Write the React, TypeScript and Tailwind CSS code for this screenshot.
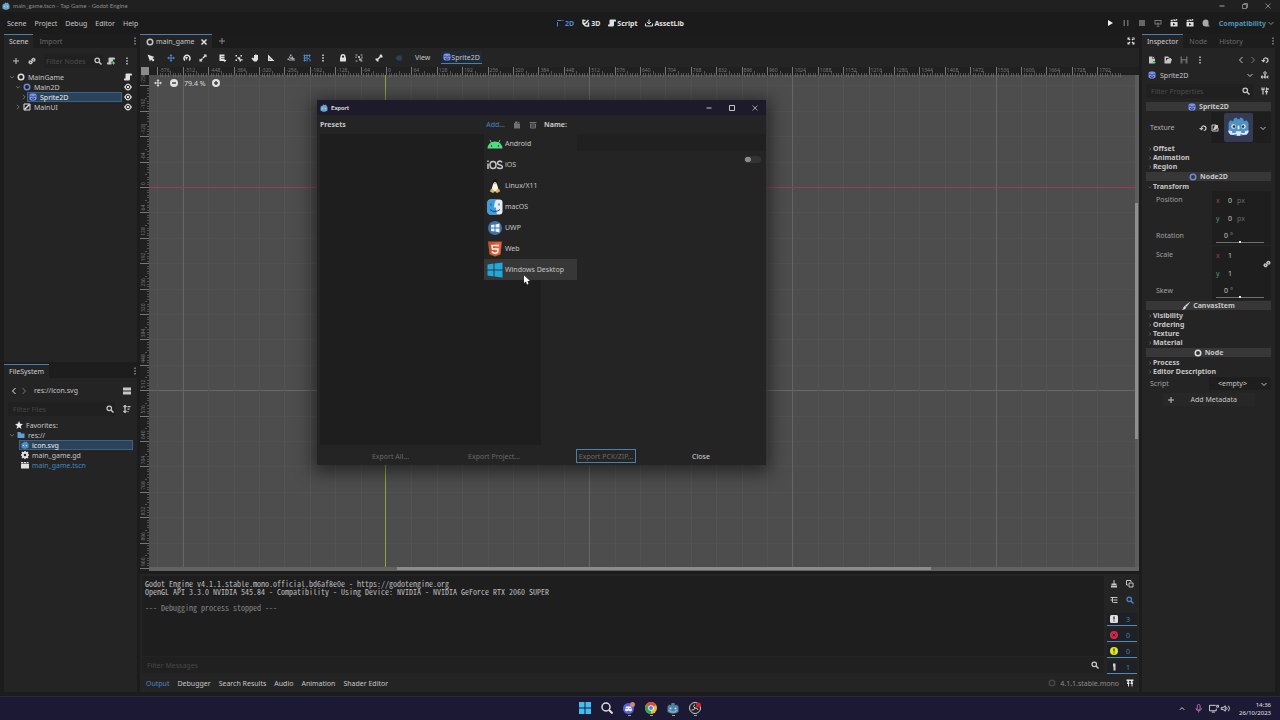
import type { ReactNode } from 'react'

const stroke = { fill: 'none', stroke: 'currentColor', strokeWidth: 2 }

// editor icons, all drawn on a 16x16 grid
const icons: Record<string, ReactNode> = {
  plus: <path d="M8 2v12M2 8h12" {...stroke} />,
  close: <path d="M3 3l10 10M13 3L3 13" {...stroke} strokeWidth={3} />,
  thinClose: <path d="M3 3l10 10M13 3L3 13" {...stroke} strokeWidth={1.5} />,
  minimize: <path d="M3 8h10" {...stroke} />,
  maximize: <path d="M3 3h10v10H3z" {...stroke} />,
  restore: <path d="M3 5h8v8H3zM6 5V3h7v8h-2" {...stroke} strokeWidth={1.5} />,
  link: (
    <path d="M7 6l2-2a2.500 2.500 0 0 1 4 3l-2 2M9 10l-2 2a2.500 2.500 0 0 1-4-3l2-2M6 10l4-4" {...stroke} strokeWidth={3} />
  ),
  search: (
    <>
      <circle cx="6.500" cy="6.500" r="4.500" {...stroke} strokeWidth={2.5} />
      <path d="M10 10l5 5" {...stroke} strokeWidth={3} />
    </>
  ),
  more: <path d="M6.500 1h3v3h-3zM6.500 6.500h3v3h-3zM6.500 12h3v3h-3z" />,
  node: <circle cx="8" cy="8" r="5.500" {...stroke} strokeWidth={3} />,
  sprite: (
    <>
      <rect x="1" y="1" width="14" height="14" rx="4" />
      <path d="M4 5v3M12 5v3M8 6v3M4 11q4 3 8 0" fill="none" stroke="#2c3663" strokeWidth={2} />
    </>
  ),
  control: (
    <>
      <path d="M2 2h12v12H2z" {...stroke} />
      <path d="M3 13L13 3" {...stroke} strokeWidth={3} />
    </>
  ),
  script: <path d="M5 1h9a2 2 0 0 1 2 2v2h-4v7a3 3 0 0 1-3 3H2a2 2 0 0 1-2-2v-2h3V3a2 2 0 0 1 2-2z" />,
  addScript: (
    <>
      <path d="M5 1h9a2 2 0 0 1 2 2v2h-4v4H9v6H2a2 2 0 0 1-2-2v-2h3V3a2 2 0 0 1 2-2z" />
      <path d="M13 9v6M10 12h6" fill="none" stroke="#5fe07a" strokeWidth={2} />
    </>
  ),
  eye: (
    <>
      <path d="M0 8q8-14 16 0q-8 14-16 0z" />
      <circle cx="8" cy="8" r="3.500" fill="none" stroke="#242424" strokeWidth={2} />
    </>
  ),
  right: <path d="M5 2l6 6-6 6" {...stroke} />,
  left: <path d="M11 2L5 8l6 6" {...stroke} />,
  down: <path d="M3 6l5 5 5-5" {...stroke} />,
  select: <path d="M1 1l5 14 2-4 4 4 3-3-4-4 4-2z" />,
  move: <path d="M8 0l3 4H9v3h3V5l4 3-4 3V9H9v3h2l-3 4-3-4h2V9H4v2L0 8l4-3v2h3V4H5z" />,
  rotate: (
    <>
      <path d="M4 13A6 6 0 1 1 12 13" {...stroke} strokeWidth={3} />
      <path d="M4 6h6l-3 6z" />
    </>
  ),
  reload: (
    <>
      <path d="M5 9V8a4.500 4.500 0 1 1 4.500 5" {...stroke} strokeWidth={2.5} />
      <path d="M0 8h9l-4 5z" />
    </>
  ),
  scale: <path d="M9 1h6v6l-2-2-4 4-2-2 4-4zM1 9l2 2 3-3 2 2-3 3 2 2H1z" />,
  listSelect: <path d="M1 1h10v3H4v1h7v3H4v1h7v2l4 2-4 3-2-2H1z" />,
  pivot: <path d="M1 2h3v3H1zM11 2h3v3h-3zM5 6l4 1 1-2 1 6 4-1v3h-3v2h-3v-3L5 9zM1 11h3v3H1z" />,
  hand: <path d="M6 2h2V1h3v1h3v9l-3 4H6L1 9l2-2 3 2z" />,
  ruler: <path d="M2 1l13 13H2zM5 8v3h3z" fillRule="evenodd" />,
  smartSnap: <path d="M6 1h3v3H6zM1 9h3v3H1zM4 5h3v3H4zM9 8V5h3v3h3v6h-2v-3h-2v3H9v-4H7v4H5V9z" />,
  gridSnap: <path d="M1 3h14M1 8h8M1 13h5M3 1v14M8 1v8M13 1v6M8 15v-3a3 3 0 0 1 6 0v3" {...stroke} />,
  lock: <path d="M3 7V5a5 5 0 0 1 10 0v2h1v8H2V7zm3 0h4V5a2 2 0 0 0-4 0z" fillRule="evenodd" />,
  group: (
    <path d="M1 1h4v2H1zM11 1h4v2h-4zM1 5h2v3H1zM6 4h4v4H6zM13 5h2v4h-2zM8 9h5v4H8zM1 13h4v2H1zM11 13h4v2h-4z" />
  ),
  bone: <path d="M10 1l3 0 2 3v3h-4L7 11v4H4l-1-2-2-1V9h4l4-4z" />,
  key: <path d="M1 8l4-5h7l3 5-3 5H5z" />,
  expand: (
    <path d="M1 1h5L1 6zM10 1h5v5zM1 10v5h5zM15 10v5h-5zM4 2l3 3-2 2-3-3zM12 2L9 5l2 2 3-3zM4 14l3-3-2-2-3 3zM12 14l-3-3 2-2 3 3z" />
  ),
  play: <path d="M4 2l10 6-10 6z" />,
  pause: <path d="M3 2h3v12H3zM10 2h3v12h-3z" />,
  stop: <path d="M2 2h12v12H2z" />,
  remote: <path d="M1 2h14v9H9v3h3l-4 2-4-2h3v-3H1zm2 2v5h3l2-3 2 3h3V4z" fillRule="evenodd" />,
  clapper: (
    <>
      <path d="M1 6h14v9H1zM1 2l13-2 1 3L2 5z" />
      <path d="M6 8l5 2.500L6 13z" fill="#1b1b1b" />
      <path d="M5 1l2 3M10 0l2 3" stroke="#1b1b1b" strokeWidth={1.5} />
    </>
  ),
  scene: (
    <>
      <path d="M0 6h16v9H0zM0 2h15v3H0z" />
      <path d="M4 1l2 4M10 1l2 4" stroke="#1b1b1b" strokeWidth={1.5} />
    </>
  ),
  movie: <path d="M8 1a5 5 0 0 1 5 5v7h2v2H8A7 7 0 1 1 8 1z" />,
  two: <path d="M3 15V3h12" {...stroke} strokeDasharray="9 2" />,
  three: <path d="M2 1v8l5 5M2 9h5l6-7M7 14h6V7M3 3h4" {...stroke} strokeWidth={3} />,
  download: <path d="M8 1v9M4 6l4 4 4-4M1 9v5h14V9" {...stroke} />,
  newFile: (
    <>
      <path d="M2 1h7v5h5v4h-4v5H2zM10 1l4 4h-4z" />
      <path d="M12 10v6M9 13h6" stroke="#5fe07a" strokeWidth={2} />
    </>
  ),
  open: <path d="M1 1h7l3 3h3v2h2l-3 9H1zm3 3v7l2-5h5V5H8V4z" fillRule="evenodd" />,
  save: <path d="M1 1h14v14H1zM4 1v5h8V1zM5 9v6h6V9z" fillRule="evenodd" />,
  copy: <path d="M1 1h9v3M1 1v9h3M6 6h8v8H6z" {...stroke} />,
  filledCopy: <path d="M4 1h5v4h5v10H2V4h2zM10 1l4 3h-4z" />,
  trash: <path d="M1 3h14M3 6h10v8H3zM6 7v6M10 7v6" {...stroke} />,
  book: (
    <>
      <circle cx="8" cy="4" r="2.500" {...stroke} />
      <path d="M8 6v4M1 10h3v4H1zM7 10h3v4H7zM15 10h-2v4h2" {...stroke} />
    </>
  ),
  tools: <path d="M4 15V7M2 1v4h4V1M11 1v7M11 8v7M8 9h6M14 2v4" {...stroke} strokeWidth={2.5} />,
  split: <path d="M0 1h16v6H0zM0 9h16v6H0z" />,
  sort: <path d="M4 1v13M1 4l3-3 3 3M1 12l3 3 3-3M9 3h6M9 8h4M9 13h2" {...stroke} strokeWidth={2.5} />,
  star: <path d="M8 0l2.300 5.500L16 6l-4.500 4L13 16l-5-3.500L3 16l1.500-6L0 6l5.700-.5z" />,
  folder: <path d="M1 2h6l1 3h7v9H1z" />,
  gear: (
    <>
      <circle cx="8" cy="8" r="4.500" {...stroke} strokeWidth={4} />
      <path d="M8 0v3M8 13v3M0 8h3M13 8h3M2 2l3 3M11 11l3 3M2 14l3-3M11 5l3-3" {...stroke} strokeWidth={3} />
    </>
  ),
  godot: (
    <>
      <path d="M1 6l3-3 1 1 1-3 3 1h1l2-1 1 3 2 2v7q-7 5-14 0z" />
      <circle cx="5" cy="9" r="1.300" fill="#bcd9ea" />
      <circle cx="11" cy="9" r="1.300" fill="#bcd9ea" />
    </>
  ),
  brush: <path d="M15 1L7 7l2 2zM6 8l2 2q-1 5-7 5 2-1 2-3t3-4z" stroke="currentColor" strokeWidth={1} />,
  image: (
    <>
      <path d="M2 2h8M2 2v12h12V8" {...stroke} />
      <path d="M8 2h6v6L8 12H4z" />
    </>
  ),
  clear: <path d="M7 0h2v7h4v3H3V7h4zM2 11h12v4H2z" />,
  tree: <path d="M1 3h14M1 8h3M7 8h8M5 3v10M7 13h8" {...stroke} />,
  pin: <path d="M1 1h14v3H1zM2 7h5v3H6v5H4v-5H2zM9 7h5v3h-1v5h-2v-5H9zM3 4h3v3H3zM10 4h3v3h-3z" />,
  message: (
    <>
      <rect width="16" height="16" rx="3" />
      <path d="M8 3v6M8 11v2" stroke="#222222" strokeWidth={2.5} />
    </>
  ),
  error: (
    <>
      <circle cx="8" cy="8" r="8" />
      <path d="M5 5l6 6M11 5l-6 6" stroke="#5b0d1d" strokeWidth={2} />
    </>
  ),
  warning: (
    <>
      <circle cx="8" cy="8" r="8" />
      <path d="M8 3v6M8 11v2" stroke="#333300" strokeWidth={2.5} />
    </>
  ),
  edit: <path d="M6 1h5v14H7V7H6z" />,
}

function Icon({ name, size = 'size-2', className = '' }: { name: string; size?: string; className?: string }) {
  return (
    <svg viewBox="0 0 16 16" fill="currentColor" aria-hidden="true" className={`shrink-0 ${size} ${className}`}>
      {icons[name]}
    </svg>
  )
}

function IconButton({ name, label, className = '' }: { name: string; label: string; className?: string }) {
  return (
    <button type="button" aria-label={label} className={`flex size-4 shrink-0 items-center justify-center ${className}`}>
      <Icon name={name} />
    </button>
  )
}

function TitleBar() {
  return (
    <header className="flex h-3 shrink-0 items-center bg-[#202020] pl-[2px] pr-[4px]">
      <Icon name="godot" className="text-[#6ba4cc]" />
      <span className="ml-[3px] flex-1 font-['Lato',sans-serif] text-[6px] leading-[8px] text-[#8c8c8c]">
        main_game.tscn - Tap Game - Godot Engine
      </span>
      <div className="flex gap-[7px] text-[#a0a0a0]">
        <IconButton name="minimize" label="Minimize" />
        <IconButton name="restore" label="Restore" />
        <IconButton name="thinClose" label="Close window" />
      </div>
    </header>
  )
}

const modes = [
  { icon: 'two', label: '2D' },
  { icon: 'three', label: '3D' },
  { icon: 'script', label: 'Script' },
  { icon: 'download', label: 'AssetLib' },
]

function MenuBar() {
  return (
    <nav className="flex h-[22px] shrink-0 items-center justify-between bg-[#1b1b1b] pl-[7px] pr-[5px]">
      <div className="flex gap-2">
        {['Scene', 'Project', 'Debug', 'Editor', 'Help'].map((item) => (
          <button key={item} type="button">
            {item}
          </button>
        ))}
      </div>
      <div className="flex gap-2 font-bold">
        {modes.map((mode, i) => (
          <button
            key={mode.label}
            type="button"
            className={`flex items-center gap-[1px] ${i === 0 ? 'text-[#4c8bd0]' : 'text-[#e0e0e0]'}`}
          >
            <Icon name={mode.icon} />
            {mode.label}
          </button>
        ))}
      </div>
      <div className="flex items-center">
        <IconButton name="play" label="Run project" className="text-[#eeeeee]" />
        <IconButton name="pause" label="Pause" className="text-[#666666]" />
        <IconButton name="stop" label="Stop" className="text-[#666666]" />
        <IconButton name="remote" label="Remote debug" className="text-[#777777]" />
        <IconButton name="clapper" label="Run current scene" className="text-[#e0e0e0]" />
        <IconButton name="clapper" label="Run specific scene" className="text-[#e0e0e0]" />
        <IconButton name="movie" label="Movie maker" className="text-[#aaaaaa]" />
        <button type="button" className="ml-[5px] flex items-center gap-[1px] font-bold text-[#4e94b4]">
          Compatibility
          <Icon name="down" className="text-[#888888]" />
        </button>
      </div>
    </nav>
  )
}

function DockTabs({ tabs }: { tabs: string[] }) {
  return (
    <div className="flex h-[14px] shrink-0 items-center bg-[#1d1d1d]">
      {tabs.map((tab, i) => (
        <button
          key={tab}
          type="button"
          className={
            i === 0
              ? 'h-full border-t border-[#4a7fb0] bg-[#242424] px-[5px] text-[#d0d0d0]'
              : 'h-full border-t border-transparent px-[6px] text-[#6a6a6a]'
          }
        >
          {tab}
        </button>
      ))}
      <button type="button" aria-label="Dock options" className="ml-auto mr-[-2px] text-[#8a8a8a]">
        <Icon name="more" />
      </button>
    </div>
  )
}

type TreeRow = { name: string; icon: string; color: string; pad: string; arrow?: string; end?: string; active?: boolean; text?: string }

const sceneRows: TreeRow[] = [
  { name: 'MainGame', icon: 'node', color: 'text-[#e0e0e0]', pad: 'pl-[5px]', arrow: 'down', end: 'script' },
  { name: 'Main2D', icon: 'node', color: 'text-[#6f89d8]', pad: 'pl-[11px]', arrow: 'down', end: 'eye' },
  { name: 'Sprite2D', icon: 'sprite', color: 'text-[#7b93ee]', pad: 'pl-[17px]', arrow: 'right', end: 'eye', active: true },
  { name: 'MainUI', icon: 'control', color: 'text-[#e0e0e0]', pad: 'pl-[11px]', arrow: 'right', end: 'eye' },
]

const fileRows: TreeRow[] = [
  { name: 'Favorites:', icon: 'star', color: 'text-[#e8e8e8]', pad: 'pl-[9px]' },
  { name: 'res://', icon: 'folder', color: 'text-[#5f9fd6]', pad: 'pl-[5px]', arrow: 'down' },
  { name: 'icon.svg', icon: 'godot', color: 'text-[#4f8fc0]', pad: 'pl-[15px]', active: true },
  { name: 'main_game.gd', icon: 'gear', color: 'text-[#e0e0e0]', pad: 'pl-[15px]' },
  { name: 'main_game.tscn', icon: 'scene', color: 'text-[#e0e0e0]', pad: 'pl-[15px]', text: 'text-[#3f87c0]' },
]

function Tree({ rows }: { rows: TreeRow[] }) {
  return (
    <ul>
      {rows.map((row) => (
        <li key={row.name} className={`flex h-[10px] items-center ${row.pad}`}>
          {row.arrow && <Icon name={row.arrow} size="size-[6px]" className="text-[#888888]" />}
          <div
            className={`flex h-[10px] flex-1 items-center gap-[3px] border pl-[1px] ${
              row.active ? 'border-[#3d6284] bg-[#2b435a] text-[#f0f0f0]' : 'border-transparent'
            } ${row.text ?? ''}`}
          >
            <Icon name={row.icon} className={row.color} />
            {row.name}
          </div>
          {row.end ? <Icon name={row.end} className="ml-[2px] mr-[5px] text-[#e0e0e0]" /> : <span className="w-1" />}
        </li>
      ))}
    </ul>
  )
}

function LeftDock() {
  return (
    <aside className="flex w-[133px] shrink-0 flex-col gap-[2px]">
      <section className="flex flex-1 flex-col bg-[#242424]">
        <DockTabs tabs={['Scene', 'Import']} />
        <div className="flex h-[24px] items-center pl-[4px] pr-[2px] pt-[2px]">
          <IconButton name="plus" label="Add node" />
          <IconButton name="link" label="Instance scene" />
          <label className="ml-1 flex h-[14px] min-w-0 flex-1 items-center bg-[#202020] pr-px">
            <input aria-label="Filter nodes" placeholder="Filter Nodes" className="w-full min-w-0 pl-[2px] placeholder:text-[#4c4c4c]" />
            <Icon name="search" />
          </label>
          <IconButton name="addScript" label="Attach script" />
          <IconButton name="more" label="More" />
        </div>
        <Tree rows={sceneRows} />
      </section>
      <section className="flex h-[328px] flex-col bg-[#242424]">
        <DockTabs tabs={['FileSystem']} />
        <div className="flex h-[23px] items-center px-[4px] pt-[2px]">
          <button type="button" aria-label="Back" className="px-[2px]">
            <Icon name="left" className="text-[#eeeeee]" />
          </button>
          <button type="button" aria-label="Forward">
            <Icon name="right" className="text-[#777777]" />
          </button>
          <input aria-label="Path" defaultValue="res://icon.svg" className="w-0 flex-1 pl-[6px]" />
          <IconButton name="split" label="Split mode" className="mr-[-2px]" />
        </div>
        <div className="flex h-[16px] items-center px-[4px]">
          <label className="flex h-[14px] min-w-0 flex-1 items-center bg-[#202020] pr-px">
            <input aria-label="Filter files" placeholder="Filter Files" className="w-full min-w-0 pl-[5px] placeholder:text-[#444444]" />
            <Icon name="search" />
          </label>
          <IconButton name="sort" label="Sort" className="ml-1 mr-[-2px]" />
        </div>
        <div className="pt-[3px]">
          <Tree rows={fileRows} />
        </div>
      </section>
    </aside>
  )
}

const toolGroups = [
  ['select'],
  ['move', 'rotate', 'scale'],
  ['listSelect', 'pivot', 'hand', 'ruler'],
  ['smartSnap', 'gridSnap', 'more'],
  ['lock', 'group'],
  ['bone'],
  ['key'],
]

const toolColor: Record<string, string> = {
  move: 'text-[#4a86c4]',
  gridSnap: 'text-[#4a86c4]',
  key: 'text-[#2c3f5c]',
  smartSnap: 'text-[#b0b0b0]',
  group: 'text-[#b0b0b0]',
}

function CanvasToolbar() {
  return (
    <div className="flex h-[19px] shrink-0 items-center gap-1 bg-[#242424] pl-[3px]">
      {toolGroups.map((group) => (
        <div key={group[0]} className="flex">
          {group.map((tool) => (
            <IconButton key={tool} name={tool} label={tool} className={toolColor[tool] ?? 'text-[#e0e0e0]'} />
          ))}
        </div>
      ))}
      <button type="button" className="px-1">
        View
      </button>
      <button type="button" className="ml-[3px] flex h-[13px] items-center border-b border-[#4a7fb0] bg-[#1f2a36] px-[2px]">
        <Icon name="sprite" className="text-[#7b93ee]" />
        Sprite2D
      </button>
    </div>
  )
}

const CELL = 25.4
const ORIGIN_X = 246
const ORIGIN_Y = 120
const TICKS = [1, 2, 3, 4, 5, 6, 7, 8, 9]

function range(from: number, to: number) {
  return Array.from({ length: to - from + 1 }, (_, i) => from + i)
}

function CanvasGrid() {
  // as many cells as fit between the docks
  const columns = range(-9, Math.floor((window.innerWidth - 300 - ORIGIN_X) / CELL))
  const rows = range(-4, Math.floor((window.innerHeight - 214 - ORIGIN_Y) / CELL))

  return (
    <svg className="absolute inset-0 size-full" aria-hidden="true">
      {rows
        .filter((r) => r !== 0)
        .map((r) => (
          <rect key={r} x="0" y={Math.round(ORIGIN_Y + r * CELL)} width="100%" height="1" fill={r % 8 === 0 ? '#686868' : '#515151'} />
        ))}
      {columns
        .filter((c) => c !== 0)
        .map((c) => (
          <rect key={c} x={Math.round(ORIGIN_X + c * CELL)} y="0" width="1" height="100%" fill={c % 8 === 0 ? '#666666' : '#535353'} />
        ))}
      <rect x="0" y={ORIGIN_Y} width="100%" height="1" fill="#9c3a58" />
      <rect x={ORIGIN_X - 1} y="0" width="1" height="100%" fill="#88a83c" />
      {/* rulers */}
      <rect width="100%" height="8" fill="#202020" />
      <rect width="9" height="100%" fill="#202020" />
      {columns.map((c) => {
        const x = ORIGIN_X + c * CELL
        return (
          <g key={c} fill="#777777">
            <rect x={Math.round(x)} y="0" width="1" height="8" />
            {TICKS.map((t) => (
              <rect key={t} x={Math.round(x + t * 2.54)} y={t === 5 ? 4 : 6} width="1" height="4" opacity="0.6" />
            ))}
            <text x={x + 2} y="5" fontSize="5">
              {c * 64}
            </text>
          </g>
        )
      })}
      {rows.map((r) => {
        const y = ORIGIN_Y + r * CELL
        return (
          <g key={r} fill="#777777">
            <rect x="0" y={Math.round(y)} width="9" height="1" />
            {TICKS.map((t) => (
              <rect key={t} x={t === 5 ? 5 : 7} y={Math.round(y + t * 2.54)} width="2" height="1" opacity="0.6" />
            ))}
            <text transform={`translate(5 ${y - 2}) rotate(-90)`} fontSize="5">
              {r * 64}
            </text>
          </g>
        )
      })}
      <rect x="1" width="8" height="8" fill="#8a8a8a" />
    </svg>
  )
}

function Viewport() {
  return (
    <div className="relative flex-1 overflow-hidden bg-[#4d4d4d]">
      <CanvasGrid />
      <div className="absolute left-[10px] top-2 flex items-center text-[#d8d8d8]">
        <IconButton name="move" label="Center view" />
        <button type="button" aria-label="Zoom out" className="flex size-4 items-center justify-center">
          <svg viewBox="0 0 16 16" className="size-2">
            <circle cx="8" cy="8" r="8" fill="#e0e0e0" />
            <path d="M4 8h8" stroke="#444444" strokeWidth="3" />
          </svg>
        </button>
        <span className="mx-[2px]">79.4 %</span>
        <button type="button" aria-label="Zoom in" className="flex size-4 items-center justify-center">
          <svg viewBox="0 0 16 16" className="size-2">
            <circle cx="8" cy="8" r="8" fill="#e0e0e0" />
            <path d="M4 8h8M8 4v8" stroke="#444444" strokeWidth="3" />
          </svg>
        </button>
      </div>
      <div className="absolute bottom-0 left-[9px] right-0 h-[4px] bg-[#626262]">
        <div className="ml-[25%] h-[3px] w-[54%] bg-[#8c8c8c]" />
      </div>
      <div className="absolute bottom-[4px] right-0 top-2 w-[4px] bg-[#5c5c5c]">
        <div className="absolute top-[26%] h-[48%] w-[3px] bg-[#8f8f8f]" />
      </div>
    </div>
  )
}

const counters = [
  { icon: 'message', color: 'text-[#e0e0e0]', count: 3, label: 'Messages' },
  { icon: 'error', color: 'text-[#d4284c]', count: 0, label: 'Errors' },
  { icon: 'warning', color: 'text-[#e3e329]', count: 0, label: 'Warnings' },
  { icon: 'edit', color: 'text-[#d0d0d0]', count: 1, label: 'Editor messages' },
]

function OutputPanel() {
  return (
    <section className="mt-[3px] flex h-[118px] shrink-0 flex-col bg-[#242424]">
      <div className="flex flex-1 gap-[2px] pl-[2px] pr-px pt-[2px]">
        <div className="flex flex-1 flex-col">
          <pre className="flex-1 bg-[#1e1e1e] pl-[3px] pt-[4px] font-['Noto_Sans_Mono_CJK_SC','Liberation_Mono',monospace] text-[8px] leading-[8px] text-[#bdbdbd]">
            {'Godot Engine v4.1.1.stable.mono.official.bd6af8e0e - https://godotengine.org\n'}
            {'OpenGL API 3.3.0 NVIDIA 545.84 - Compatibility - Using Device: NVIDIA - NVIDIA GeForce RTX 2060 SUPER\n\n'}
            <span className="text-[#858585]">--- Debugging process stopped ---</span>
          </pre>
          <label className="mb-px mt-px flex h-[16px] items-center bg-[#202020] pr-[5px]">
            <input aria-label="Filter messages" placeholder="Filter Messages" className="flex-1 pl-[5px] placeholder:text-[#474747]" />
            <Icon name="search" />
          </label>
        </div>
        <div className="flex w-[32px] flex-col items-center">
          <div className="mb-[5px] grid grid-cols-2">
            <IconButton name="clear" label="Clear output" />
            <IconButton name="copy" label="Copy output" />
            <IconButton name="tree" label="Collapse duplicates" />
            <IconButton name="search" label="Show search" className="text-[#4a86c4]" />
          </div>
          <div className="flex flex-col gap-[3px]">
            {counters.map((c) => (
              <button
                key={c.label}
                type="button"
                aria-label={c.label}
                className="flex h-[13px] w-[30px] items-center gap-2 border-b border-[#5488bb] bg-[#1d2126] pl-[3px] text-[#4a7fb0]"
              >
                <Icon name={c.icon} className={c.color} />
                {c.count}
              </button>
            ))}
          </div>
        </div>
      </div>
      <div className="flex h-[18px] items-center gap-[8px] pl-[6px] pr-[5px]">
        {['Output', 'Debugger', 'Search Results', 'Audio', 'Animation', 'Shader Editor'].map((tab, i) => (
          <button key={tab} type="button" className={i === 0 ? 'text-[#4a86c4]' : ''}>
            {tab}
          </button>
        ))}
        <div className="ml-auto flex items-center gap-1 text-[#8c8c8c]">
          <Icon name="node" className="text-[#444444]" />
          4.1.1.stable.mono
          <Icon name="pin" className="ml-[3px] text-[#e0e0e0]" />
        </div>
      </div>
    </section>
  )
}

function Category({ icon, color, children }: { icon: string; color: string; children: ReactNode }) {
  return (
    <h3 className="my-px flex h-[9px] items-center justify-center gap-[3px] bg-[#373737] font-bold">
      <Icon name={icon} className={color} />
      {children}
    </h3>
  )
}

function Fold({ open = false, children }: { open?: boolean; children: ReactNode }) {
  return (
    <button type="button" className="flex h-[9px] w-full items-center gap-[1px] pl-[2px] font-bold">
      <Icon name={open ? 'down' : 'right'} size="size-1" className="text-[#999999]" />
      {children}
    </button>
  )
}

function VectorField({ label, unit = '', value, linked = false }: { label: string; unit?: string; value: number; linked?: boolean }) {
  return (
    <div className="flex">
      <span className="w-[66px] pl-[10px] pt-[4px] text-[#a0a0a0]">{label}</span>
      <div className="flex-1 bg-[#1e1e1e]">
        {['x', 'y'].map((axis) => (
          <label key={axis} className="flex h-[18px] items-center gap-[3px] pl-[4px]">
            <span className={axis === 'x' ? 'w-[9px] text-[#a04050]' : 'w-[9px] text-[#4c9c80]'}>{axis}</span>
            <input aria-label={`${label} ${axis}`} defaultValue={value} className="w-[6px]" />
            <span className="text-[#686868]">{unit}</span>
          </label>
        ))}
      </div>
      {linked && (
        <button type="button" aria-label="Link scale" className="ml-[-8px]">
          <Icon name="link" />
        </button>
      )}
    </div>
  )
}

function AngleField({ label }: { label: string }) {
  return (
    <div className="mb-px flex h-[18px]">
      <span className="w-[66px] pl-[10px] pt-[4px] text-[#a0a0a0]">{label}</span>
      <div className="flex flex-1 flex-col bg-[#1e1e1e] pl-[4px] pr-[7px] pt-[4px]">
        <label className="flex pl-[8px]">
          <input aria-label={label} defaultValue="0" className="w-[6px]" />
          <span className="text-[#888888]">°</span>
        </label>
        <div className="mt-[1px] flex h-[2px] items-center justify-center bg-[linear-gradient(#707070,#707070)] bg-[length:100%_1px] bg-center bg-no-repeat">
          <span className="size-[2px] bg-[#eeeeee]" />
        </div>
      </div>
    </div>
  )
}

function GodotFace() {
  return (
    <svg viewBox="0 0 32 32" className="size-[29px] rounded-xs bg-[#363a52]" aria-label="icon.svg">
      <path d="M5 11l2-3 3 1 1-3 3-1 1 2h2l1-2 3 1 1 3 3-1 2 3v11q-11 7-22 0z" fill="#4a92c8" />
      <path d="M5 19l4 1v2h4v-2h6v2h4v-2l4-1v2l-2 3h-4l-3-1v2h-4v-2l-3 1H7l-2-3z" fill="#dfe9f1" />
      <circle cx="10.500" cy="15" r="2.500" fill="#f0f0f0" />
      <circle cx="21.500" cy="15" r="2.500" fill="#f0f0f0" />
      <circle cx="11" cy="15" r="1.500" fill="#333333" />
      <circle cx="21" cy="15" r="1.500" fill="#333333" />
      <path d="M16 14v4" stroke="#f0f0f0" strokeWidth="2" />
    </svg>
  )
}

function Inspector() {
  return (
    <aside className="flex w-[133px] shrink-0 flex-col bg-[#242424]">
      <DockTabs tabs={['Inspector', 'Node', 'History']} />
      <div className="flex h-[22px] items-center px-[2px] pt-[2px]">
        <IconButton name="newFile" label="New resource" />
        <IconButton name="open" label="Load resource" />
        <IconButton name="save" label="Save resource" className="text-[#666666]" />
        <IconButton name="more" label="More" />
        <IconButton name="left" label="Previous" className="ml-auto" />
        <button type="button" aria-label="Next">
          <Icon name="right" className="text-[#777777]" />
        </button>
        <IconButton name="reload" label="History" />
      </div>
      <div className="flex h-[10px] items-center pl-[6px] pr-[2px]">
        <button type="button" className="flex flex-1 items-center gap-[4px]">
          <Icon name="sprite" className="text-[#7b93ee]" />
          <span className="flex-1 text-left">Sprite2D</span>
          <Icon name="down" />
        </button>
        <IconButton name="book" label="Documentation" className="ml-[3px]" />
      </div>
      <div className="mb-px mt-[2px] flex h-[18px] items-center pl-[4px] pr-[2px]">
        <label className="flex h-[14px] min-w-0 flex-1 items-center bg-[#202020] pr-[3px]">
          <input aria-label="Filter properties" placeholder="Filter Properties" className="w-full min-w-0 pl-[5px] placeholder:text-[#4c4c4c]" />
          <Icon name="search" />
        </label>
        <IconButton name="tools" label="Property tools" className="ml-1" />
      </div>
      <div className="pl-1 pr-[4px]">
        <Category icon="sprite" color="text-[#7b93ee]">
          Sprite2D
        </Category>
        <div className="mb-px flex h-[31px] items-center">
          <span className="flex-1 pl-[4px] text-[#b0b0b0]">Texture</span>
          <IconButton name="reload" label="Revert" />
          <div className="flex h-[31px] items-center bg-[#1e1e1e]">
            <Icon name="image" className="mr-[5px]" />
            <GodotFace />
            <IconButton name="down" label="Texture options" className="ml-[2px]" />
          </div>
        </div>
        <Fold>Offset</Fold>
        <Fold>Animation</Fold>
        <Fold>Region</Fold>
        <Category icon="node" color="text-[#6f89d8]">
          Node2D
        </Category>
        <Fold open>Transform</Fold>
        <VectorField label="Position" unit="px" value={0} />
        <AngleField label="Rotation" />
        <VectorField label="Scale" value={1} linked />
        <AngleField label="Skew" />
        <Category icon="brush" color="text-[#e0e0e0]">
          CanvasItem
        </Category>
        <Fold>Visibility</Fold>
        <Fold>Ordering</Fold>
        <Fold>Texture</Fold>
        <Fold>Material</Fold>
        <Category icon="node" color="text-[#e0e0e0]">
          Node
        </Category>
        <Fold>Process</Fold>
        <Fold>Editor Description</Fold>
        <div className="flex h-[15px] items-center">
          <label htmlFor="script" className="w-[63px] pl-[4px] text-[#a0a0a0]">
            Script
          </label>
          <div className="flex flex-1 items-center bg-[#1e1e1e] pl-[9px] pr-[3px]">
            <select id="script" className="h-[13px] flex-1 appearance-none">
              <option>&lt;empty&gt;</option>
            </select>
            <Icon name="down" />
          </div>
        </div>
        <button type="button" className="mx-auto mt-[2px] flex h-[13px] w-[92px] items-center gap-4 bg-[#272727] pl-[4px]">
          <Icon name="plus" />
          Add Metadata
        </button>
      </div>
    </aside>
  )
}

const platforms: { name: string; art: ReactNode }[] = [
  {
    name: 'Android',
    art: (
      <>
        <path d="M1 25a15 14 0 0 1 30 0z" fill="#4fdc82" />
        <path d="M9 14L6 8M23 14l3-6" stroke="#4fdc82" strokeWidth="2" />
        <circle cx="9" cy="20" r="1.500" fill="#222222" />
        <circle cx="23" cy="20" r="1.500" fill="#222222" />
      </>
    ),
  },
  {
    name: 'iOS',
    art: (
      <g fill="none" stroke="#c8c8c8" strokeWidth="3">
        <path d="M2 13v11M2 7v3" />
        <ellipse cx="12" cy="16" rx="6" ry="7" />
        <path d="M30 11q-1-3-5-3-4 1-4 4t5 4q5 1 5 4t-5 3q-5 0-5-3" />
      </g>
    ),
  },
  {
    name: 'Linux/X11',
    art: (
      <>
        <path d="M16 3c-5 0-5 5-5 9 0 3-5 8-5 14h20c0-6-5-11-5-14 0-4 0-9-5-9z" fill="#161616" />
        <path d="M16 8c-3 0-6 9-7 16q7 6 14 0c-1-7-4-16-7-16z" fill="#f2f2f2" />
        <path d="M7 23l4-2 4 7-3 2-6-3zM25 23l-4-2-4 7 3 2 6-3zM13 10l3-2 3 2-3 3z" fill="#e0b850" />
      </>
    ),
  },
  {
    name: 'macOS',
    art: (
      <>
        <rect x="1" y="1" width="30" height="30" rx="6" fill="#e4edf3" />
        <path d="M7 1h11q-4 7-4 16h4q0 8 2 14H7a6 6 0 0 1-6-6V7a6 6 0 0 1 6-6z" fill="#3a9de0" />
        <path d="M8 9v4M24 9v4M6 21q10 8 20 0" fill="none" stroke="#25415c" strokeWidth="2" />
      </>
    ),
  },
  {
    name: 'UWP',
    art: (
      <>
        <circle cx="16" cy="16" r="14" fill="#3a72b4" />
        <path d="M8 10l7-1v6H8zM17 9l8-2v8h-8zM8 17h7v6l-7-1zM17 17h8v8l-8-2z" fill="#f2f2f2" />
      </>
    ),
  },
  {
    name: 'Web',
    art: (
      <>
        <path d="M2 1h28l-3 26-11 4-11-4z" fill="#c9552f" />
        <path d="M16 3h12l-2 23-10 3z" fill="#dc6a40" />
        <path d="M24 9H10l1 7h11l-1 7-5 2-5-2v-3" fill="none" stroke="#f4f4f4" strokeWidth="3" />
      </>
    ),
  },
  {
    name: 'Windows Desktop',
    art: <path d="M1 5l12-2v12H1zM15 3l16-2v14H15zM1 17h12v12L1 27zM15 17h16v14l-16-2z" fill="#20a8dc" />,
  },
]

function ExportDialog() {
  return (
    <div
      role="dialog"
      aria-label="Export"
      className="absolute left-[317px] top-[100px] flex h-[365px] w-[449px] flex-col bg-[#242424] shadow-[0_3px_16px_4px_rgba(0,0,0,0.5)]"
    >
      <div className="flex h-[15px] shrink-0 items-center bg-[#1d1a2c] pl-[3px] pr-[3px]">
        <Icon name="godot" className="text-[#6ba4cc]" />
        <span className="ml-[3px] flex-1 font-['Lato',sans-serif] text-[6px] font-bold text-[#e0e0e0]">Export</span>
        <div className="flex gap-[7px]">
          <IconButton name="minimize" label="Minimize dialog" />
          <IconButton name="maximize" label="Maximize dialog" />
          <IconButton name="thinClose" label="Close dialog" />
        </div>
      </div>
      <div className="flex flex-1 gap-[3px] pl-[3px]">
        <div className="flex w-[221px] flex-col">
          <div className="flex h-[19px] items-center">
            <h2 className="flex-1 font-bold">Presets</h2>
            <button type="button" className="mr-[4px] text-[#4a86c4]">
              Add...
            </button>
            <IconButton name="filledCopy" label="Duplicate preset" className="text-[#707070]" />
            <IconButton name="trash" label="Delete preset" className="text-[#707070]" />
          </div>
          <div className="flex-1 bg-[#1e1e1e]" />
        </div>
        <div className="flex-1">
          <label htmlFor="preset-name" className="flex h-[19px] items-center font-bold">
            Name:
          </label>
          <input id="preset-name" disabled className="block h-[17px] w-full bg-[#202020]" />
          <div className="flex justify-end pr-[5px] pt-[5px]">
            <input
              type="checkbox"
              aria-label="Runnable"
              disabled
              className="h-[7px] w-[17px] appearance-none rounded-full bg-[#333333] bg-[radial-gradient(circle_at_4px_50%,#8a8a8a_3px,transparent_3px)]"
            />
          </div>
        </div>
      </div>
      <div className="grid h-[20px] grid-cols-[147px_60px_164px_auto] items-center pt-[2px] text-center text-[#696969]">
        <button type="button" disabled>
          Export All...
        </button>
        <button type="button" disabled>
          <span className="whitespace-nowrap">Export Project...</span>
        </button>
        <button type="button" disabled className="mx-auto h-[14px] w-[60px] border border-[#4a7fb0]">
          Export PCK/ZIP...
        </button>
        <button type="button" className="pr-[52px] text-[#d8d8d8]">
          Close
        </button>
      </div>

      {/* platform menu */}
      <div role="menu" className="absolute left-[167px] top-[33px] w-[93px] bg-[#242424]">
        {platforms.map((p) => (
          <button
            key={p.name}
            type="button"
            role="menuitem"
            className={`flex h-[21px] w-full items-center gap-[2px] pl-[3px] ${p.name === 'Windows Desktop' ? 'bg-[#373737]' : ''}`}
          >
            <svg viewBox="0 0 32 32" className="size-4 shrink-0" aria-hidden="true">
              {p.art}
            </svg>
            {p.name}
          </button>
        ))}
      </div>
      <svg viewBox="0 0 12 18" className="absolute left-[207px] top-[175px] h-[10px] w-[6px]" aria-hidden="true">
        <path d="M0 0v15l4-3 2 6 3-1-2-6h5z" fill="#ffffff" />
      </svg>
    </div>
  )
}

const apps: { name: string; running: boolean; art: ReactNode }[] = [
  { name: 'Start', running: false, art: <path d="M0 0h11v11H0zM13 0h11v11H13zM0 13h11v11H0zM13 13h11v11H13z" fill="#42bdf2" /> },
  {
    name: 'Search',
    running: false,
    art: (
      <g fill="none" stroke="#dddddd" strokeWidth="3">
        <circle cx="10" cy="10" r="8" />
        <path d="M16 16l7 7" strokeWidth="4" />
      </g>
    ),
  },
  {
    name: 'Discord',
    running: true,
    art: (
      <>
        <circle cx="11" cy="13" r="11" fill="#5662d8" />
        <path d="M4 17l2-8h10l2 8-4 2-2-2h-2l-2 2z" fill="#ffffff" />
        <circle cx="8" cy="13" r="1.500" fill="#5662d8" />
        <circle cx="14" cy="13" r="1.500" fill="#5662d8" />
        <circle cx="19" cy="5" r="5" fill="#d98078" />
      </>
    ),
  },
  {
    name: 'Chrome',
    running: true,
    art: (
      <>
        <circle cx="12" cy="12" r="12" fill="#e8bc35" />
        <path d="M12 12L1.600 6A12 12 0 0 1 22.400 6z" fill="#dc4b3e" />
        <path d="M12 12L1.600 6A12 12 0 0 0 12 24z" fill="#35a457" />
        <circle cx="12" cy="12" r="5.500" fill="#ffffff" />
        <circle cx="12" cy="12" r="4" fill="#4485ef" />
      </>
    ),
  },
  {
    name: 'Godot',
    running: true,
    art: (
      <>
        <path d="M1 9l4-4 3 2 1-5h6l1 5 3-2 4 4v11q-11 7-22 0z" fill="#4d83a8" />
        <path d="M3 17l4 1v2h10v-2l4-1" fill="none" stroke="#9dbccd" strokeWidth="2" />
        <circle cx="7" cy="13" r="2" fill="#c7d9e2" />
        <circle cx="17" cy="13" r="2" fill="#c7d9e2" />
      </>
    ),
  },
  {
    name: 'OBS',
    running: true,
    art: (
      <>
        <circle cx="12" cy="12" r="11" fill="#222222" stroke="#cccccc" strokeWidth="2" />
        <path d="M11 5q-4 5 1 7M5 16q6 1 7-4M18 16q-1-5-6-4" fill="none" stroke="#cccccc" strokeWidth="2" />
        <circle cx="19" cy="6" r="5" fill="#d8202c" />
      </>
    ),
  },
]

function Taskbar() {
  return (
    <footer className="grid h-[24px] shrink-0 grid-cols-[1fr_auto_1fr] items-center border-t border-[#2b2743] bg-[#1c1934]">
      <span />
      <div className="flex">
        {apps.map((app) => (
          <button key={app.name} type="button" aria-label={app.name} className="flex w-[22px] flex-col items-center gap-[1px]">
            <svg viewBox="0 0 24 24" className="size-3" aria-hidden="true">
              {app.art}
            </svg>
            <span className={app.running ? 'h-px w-[3px] bg-[#a0a0a0]' : 'h-px w-[3px]'} />
          </button>
        ))}
      </div>
      <div className="flex items-center justify-end pr-[9px] text-[#e0e0e0]">
        <svg viewBox="0 0 120 20" className="mr-[7px] h-[9px] w-[54px]" fill="none" stroke="currentColor" strokeWidth="2" aria-label="Tray">
          <path d="M4 13l5-5 5 5" />
          <path d="M43 4a3 3 0 0 1 6 0v6a3 3 0 0 1-6 0zM40 9q0 6 6 6t6-6M46 15v4" stroke="#c070b0" />
          <path d="M84 3H70v12h15v-5M75 18h7M86 3h4v4h-4z" />
          <path d="M96 8h4l5-4v12l-5-4h-4zM108 7q2 3 0 6M112 4q5 6 0 12" />
        </svg>
        <div className="text-right text-[6px] leading-[8px]">
          14:36
          <br />
          26/10/2023
        </div>
      </div>
    </footer>
  )
}

export default function App() {
  return (
    <div className="relative flex h-screen flex-col overflow-hidden bg-[#1c1c1c] font-['Noto_Sans',sans-serif] text-[7px] leading-[9px] text-[#c6c6c6]">
      <TitleBar />
      <MenuBar />
      <main className="flex min-h-0 flex-1 gap-[3px] pb-[4px] pl-1 pr-[5px]">
        <LeftDock />
        <div className="flex min-w-0 flex-1 flex-col">
          <div className="flex h-[14px] shrink-0 items-center">
            <button type="button" className="flex h-full items-center gap-[2px] border-t border-[#4a7fb0] bg-[#242424] pl-[6px] pr-[4px]">
              <Icon name="node" />
              main_game
              <Icon name="close" className="ml-[4px] text-[#e0e0e0]" />
            </button>
            <IconButton name="plus" label="New scene" className="ml-[2px] text-[#8a8a8a]" />
            <IconButton name="expand" label="Distraction free mode" className="ml-auto text-[#e0e0e0]" />
          </div>
          <CanvasToolbar />
          <Viewport />
          <OutputPanel />
        </div>
        <Inspector />
      </main>
      <Taskbar />
      <ExportDialog />
    </div>
  )
}
